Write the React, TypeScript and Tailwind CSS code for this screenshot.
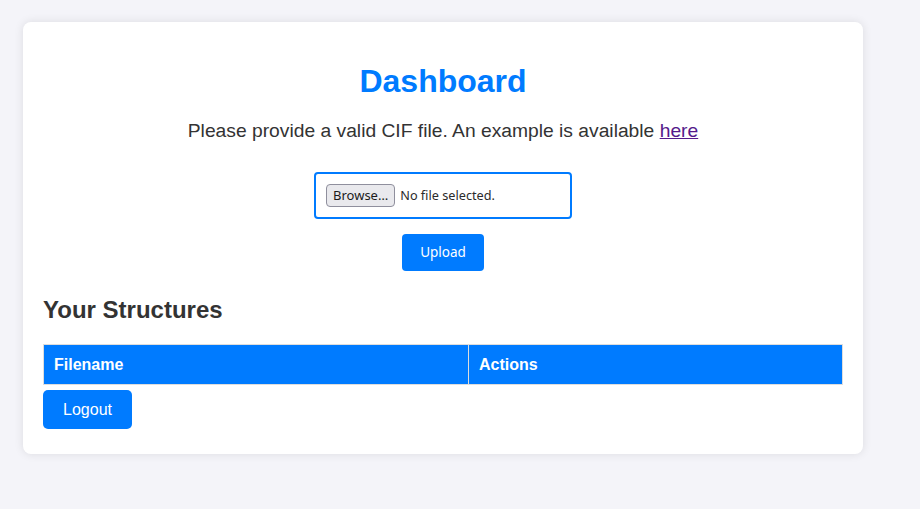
import React from "react";

export default function App() {
  return (
    <div className="min-h-[509px] w-full bg-[#f4f4f9] pt-[22px] pb-[55px]" style={{ fontFamily: '"Liberation Sans", Arial, sans-serif' }}>
      <div className="ml-[23px] w-[840px] rounded-[8px] bg-white px-[20px] pt-[20px] pb-[25px] shadow-[0_0_10px_rgba(0,0,0,0.1)] text-[#333]">
        <h1 className="mt-[21px] text-center text-[32px] font-bold leading-[37px] text-[#007bff]">Dashboard</h1>
        <p className="mt-[20px] text-center text-[19.25px] leading-[22px]">
          Please provide a valid CIF file. An example is available{" "}
          <a href="#" className="text-[#551a8b] underline">here</a>
        </p>
        <div className="mt-[30px] flex flex-col items-center" style={{ fontFamily: '"Noto Sans", sans-serif' }}>
          <div className="flex h-[47px] w-[258px] items-center rounded-[4px] border-2 border-[#007bff] px-[10px] text-[12.7px] text-[#333]">
            <span className="flex h-[23px] items-center rounded-[4px] border border-[#8f8f9d] bg-[#e9e9ed] px-[6px] text-[13px] text-[#1b1b1b]">Browse…</span>
            <span className="ml-[5px] text-[#2b2b2b]">No file selected.</span>
          </div>
          <button className="mt-[15px] flex h-[37px] w-[82px] items-center justify-center rounded-[4px] bg-[#007bff] text-[13.5px] text-white">Upload</button>
        </div>
        <h2 className="mt-[25px] text-[24px] font-bold leading-[28px]">Your Structures</h2>
        <div className="mt-[20px] grid h-[41px] grid-cols-[424px_1fr] border border-[#ddd] bg-[#007bff] text-[16px] font-bold text-white">
          <div className="flex items-center px-[10px]">Filename</div>
          <div className="flex items-center border-l border-[#ddd] px-[10px]">Actions</div>
        </div>
        <button className="mt-[5px] flex h-[39px] w-[89px] items-center justify-center rounded-[5px] bg-[#007bff] text-[16px] text-white">Logout</button>
      </div>
    </div>
  );
}
